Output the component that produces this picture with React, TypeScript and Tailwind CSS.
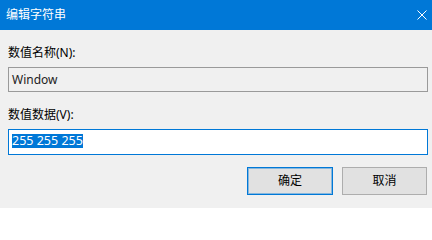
export default function App() {
  return (
    <div
      className="w-[432px] min-h-[208px] bg-[#f0f0f0] overflow-hidden text-[12px] text-black"
      style={{ fontFamily: '"Noto Sans", "Noto Sans CJK SC", sans-serif' }}
    >
      {/* Title bar */}
      <div className="h-[30px] bg-[#0078d7] flex items-center justify-between pl-[6px] pr-[5px]">
        <span className="text-white leading-none">编辑字符串</span>
        <svg width="10" height="10" viewBox="0 0 10 10" className="mb-[1px]">
          <path d="M0.5 0.5 L9.5 9.5 M9.5 0.5 L0.5 9.5" stroke="#ffffff" strokeWidth="1" />
        </svg>
      </div>

      {/* Body */}
      <div className="pl-2 pr-[4px] pb-[13px]">
        <div className="mt-[14px] h-[18px] leading-[18px]">数值名称(N):</div>
        <div className="mt-[5px] h-[25px] border border-[#9a9a9a] bg-[#f0f0f0] flex items-center pl-[3px] text-[#222]">
          Window
        </div>

        <div className="mt-[14px] h-[18px] leading-[18px]">数值数据(V):</div>
        <div className="mt-[5px] h-[26px] border border-[#0078d7] bg-white flex items-center pl-[3px] pb-[2px]">
          <span className="bg-[#0078d7] text-white text-[12.5px] leading-[14px] h-[14px] inline-block">255 255 255</span>
        </div>

        <div className="mt-[12px] flex justify-end gap-[9px] pr-[1px]">
          <button className="w-[86px] h-[28px] border border-[#0078d7] bg-[#e1e1e1] text-black outline outline-1 -outline-offset-2 outline-[#0078d7]/40">
            确定
          </button>
          <button className="w-[85px] h-[28px] border border-[#adadad] bg-[#e1e1e1] text-black">
            取消
          </button>
        </div>
      </div>
    </div>
  );
}
